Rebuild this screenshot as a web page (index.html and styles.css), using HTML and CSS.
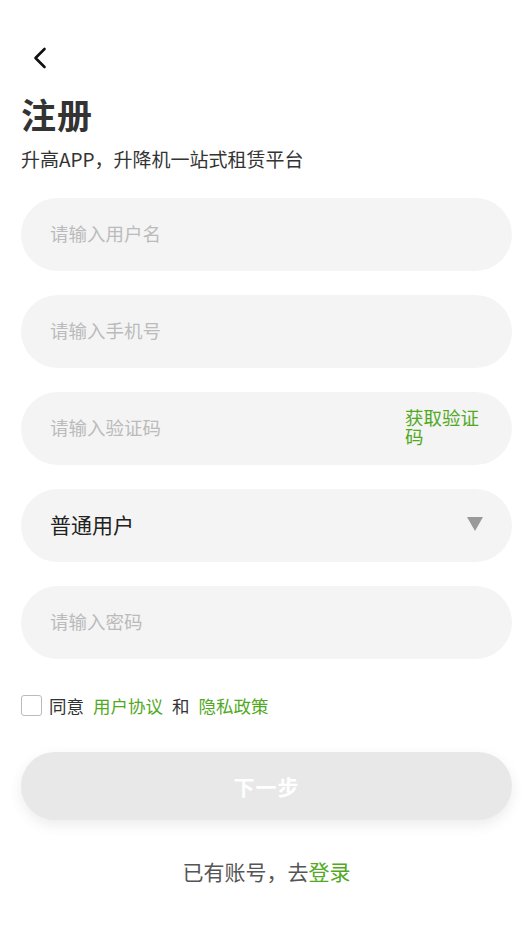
FILE: index.html
```html
<!DOCTYPE html>
<html lang="zh-CN">
  <head>
    <meta charset="UTF-8" />
    <meta name="viewport" content="width=device-width, initial-scale=1.0" />
    <title>注册</title>
    <link rel="stylesheet" href="styles.css">
  </head>
  <body>
    <div class="page">
      <div class="nav">
        <svg class="back" width="14" height="22" viewBox="0 0 14 22">
          <path d="M11.5 2 L2.5 11 L11.5 20" fill="none" stroke="#111" stroke-width="2.6" stroke-linecap="round" stroke-linejoin="round" />
        </svg>
      </div>
      <h1 class="title">注册</h1>
      <p class="subtitle">升高APP，升降机一站式租赁平台</p>

      <div class="form">
        <div class="field"><input type="text" placeholder="请输入用户名" /></div>
        <div class="field"><input type="text" placeholder="请输入手机号" /></div>
        <div class="field">
          <input type="text" placeholder="请输入验证码" />
          <span class="code-btn">获取验证码</span>
        </div>
        <div class="field select">
          <span class="select-text">普通用户</span>
          <span class="arrow"></span>
        </div>
        <div class="field"><input type="password" placeholder="请输入密码" /></div>
      </div>

      <div class="agree">
        <span class="checkbox"></span>
        <span>同意</span>
        <a class="link">用户协议</a>
        <span>和</span>
        <a class="link">隐私政策</a>
      </div>

      <button class="next">下一步</button>

      <p class="login">已有账号，去<a class="link">登录</a></p>
    </div>
  </body>
</html>
```

FILE: styles.css
```css
body {
  margin: 0;
  padding: 0;
  background-color: #fff;
  font-family: "Noto Sans CJK SC", "Noto Sans", sans-serif;
  color: #222;
}
.page {
  padding: 0 20px 0 21px;
}
.nav {
  padding-top: 47px;
  height: 22px;
}
.back {
  display: block;
  margin-left: 12px;
}
.title {
  margin: 25px 0 0 0;
  font-size: 35px;
  line-height: 40px;
  font-weight: 700;
  color: #333;
  letter-spacing: 1px;
}
.subtitle {
  margin: 13px 0 0 0;
  font-size: 19px;
  line-height: 24px;
  color: #333;
}
.form {
  margin-top: 27px;
}
.field {
  display: flex;
  align-items: center;
  box-sizing: border-box;
  height: 73px;
  margin-bottom: 24px;
  padding: 0 30px 3px 29px;
  background-color: #f4f4f4;
  border-radius: 37px;
}
.field input {
  flex: 1;
  min-width: 0;
  border: none;
  outline: none;
  background: transparent;
  font-family: inherit;
  font-size: 18.5px;
  color: #333;
  padding: 0;
}
.field input::placeholder {
  color: #bbb;
}
.code-btn {
  width: 77px;
  font-size: 18.5px;
  line-height: 19px;
  color: #52a91f;
}
.select {
  justify-content: space-between;
}
.select-text {
  font-size: 21px;
  color: #222;
}
.arrow {
  width: 0;
  height: 0;
  border-left: 8px solid transparent;
  border-right: 8px solid transparent;
  border-top: 14px solid #999;
  margin-right: -1px;
}
.agree {
  display: flex;
  align-items: center;
  margin-top: 35px;
  height: 22px;
  font-size: 17.5px;
  color: #333;
}
.agree span,
.agree a {
  margin-right: 9px;
}
.checkbox {
  width: 19px;
  height: 19px;
  border: 1px solid #bbb;
  border-radius: 3px;
  margin-right: 7px !important;
}
.link {
  color: #52a91f;
  text-decoration: none;
}
.next {
  display: block;
  width: 100%;
  height: 68px;
  margin-top: 36px;
  border: none;
  border-radius: 34px;
  background-color: #e8e8e8;
  box-shadow: 0 5px 14px rgba(0, 0, 0, 0.08);
  color: #fff;
  font-family: inherit;
  font-size: 21px;
  font-weight: 700;
  letter-spacing: 1px;
}
.login {
  margin: 37px 0 0 0;
  text-align: center;
  font-size: 21px;
  line-height: 28px;
  color: #555;
}
```
